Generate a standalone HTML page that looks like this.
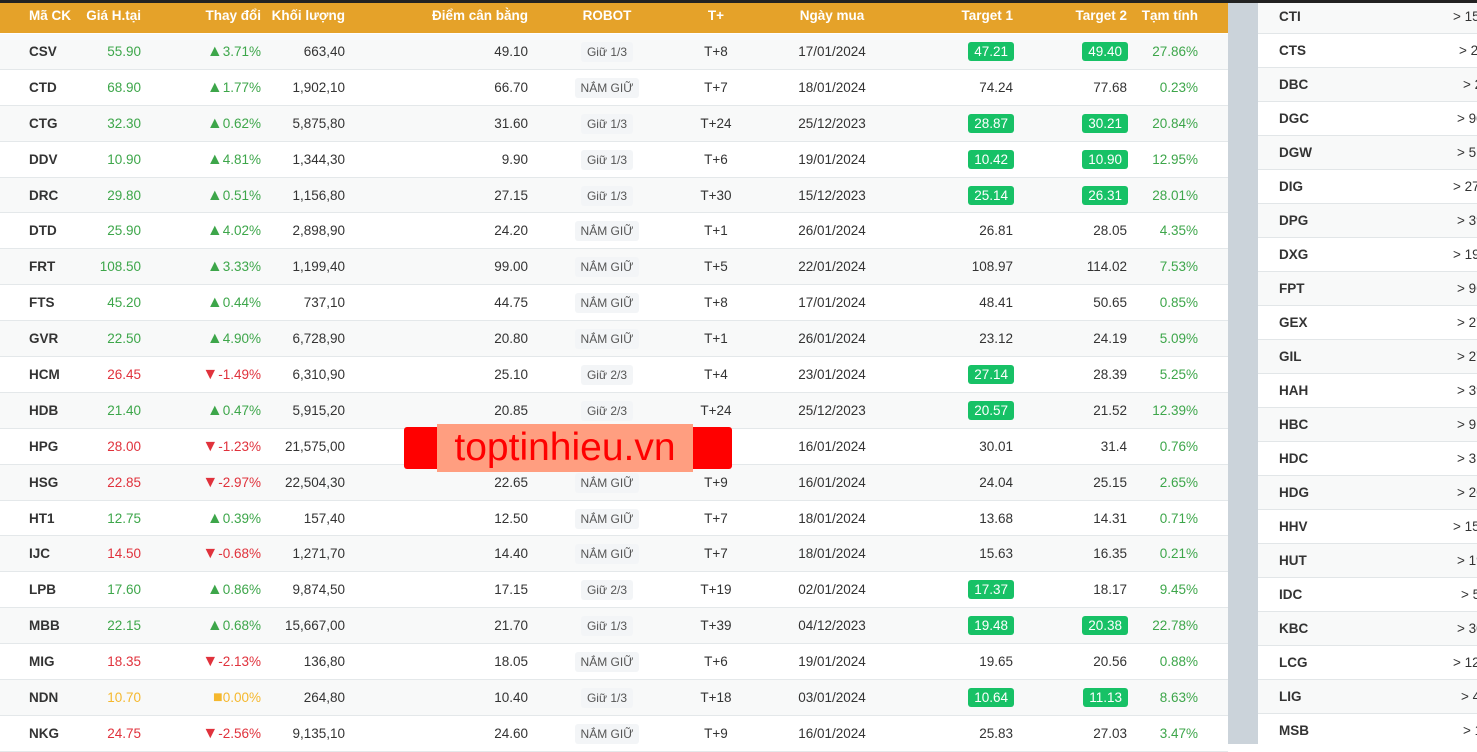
<!DOCTYPE html>
<html><head><meta charset="utf-8">
<style>
*{margin:0;padding:0;box-sizing:border-box}
body{width:1477px;height:744px;overflow:hidden;background:#fff;font-family:"Liberation Sans",Arial,sans-serif;font-size:13.5px;color:#333;position:relative}
.topbar{position:absolute;left:0;top:0;width:1477px;height:3px;background:#222;z-index:5}
.hdr{position:absolute;left:0;top:2px;width:1228px;height:31px;background:#e5a229;color:#fff;font-weight:bold;font-size:13.5px}
.hdr span{position:absolute;top:6px;white-space:nowrap}
.rows{position:absolute;left:0;top:34px;width:1228px}
.row{position:relative;height:35.9px;border-bottom:1px solid #e4e8ea}
.row.g{background:#f8f9f9}
.row span{position:absolute;top:10px;white-space:nowrap}
.c1{left:29px;font-weight:bold;color:#333}
.c2{right:1087px}.c3{right:967px}.c4{right:883px}.c5{right:700px}
.c6{left:557px;width:100px;text-align:center}
.c7{left:676px;width:80px;text-align:center}
.c8{left:772px;width:120px;text-align:center}
.c9{right:215px}.c10{right:101px}.c11{right:30px}
.gr{color:#3da64a}.rd{color:#e0323c}.yl{color:#f5b82e}
.c3 em{font-style:normal;font-size:16px;line-height:13px}
.rb{display:inline-block;background:#f3f5f7;border-radius:3px;font-size:12px;color:#555;padding:3px 6px;margin-top:-4px;font-style:normal}
.bd{display:inline-block;background:#17c166;color:#fff;border-radius:3px;padding:2px 6px;margin-top:-2px;margin-right:-1px;font-weight:normal;font-size:13.5px}
.gap{position:absolute;left:1228px;top:0;width:30px;height:744px;background:#cbd3da}
.side{position:absolute;left:1258px;top:0;width:219px;height:744px;overflow:hidden}
.srow{position:relative;height:34px;border-bottom:1px solid #e2e6e8}
.srow.g{background:#f8f9f9}
.srow span{position:absolute;top:9px;white-space:nowrap}
.srow .k{left:21px;font-weight:bold}
.wm{position:absolute;left:404px;top:427px;width:328px;height:42px;background:#ff0000;border-radius:3px;z-index:4}
.wm2{position:absolute;left:437px;top:424px;width:256px;height:48px;background:#ff9e80;z-index:5;color:#ff0000;font-size:39px;line-height:48px;text-align:center;font-family:"Liberation Sans",sans-serif}
</style></head><body>
<div class="topbar"></div>
<div class="hdr">
<span style="left:29px">Mã CK</span>
<span style="right:1087px">Giá H.tại</span>
<span style="right:967px">Thay đổi</span>
<span style="right:883px">Khối lượng</span>
<span style="right:700px">Điểm cân bằng</span>
<span style="left:557px;width:100px;text-align:center">ROBOT</span>
<span style="left:676px;width:80px;text-align:center">T+</span>
<span style="left:772px;width:120px;text-align:center">Ngày mua</span>
<span style="right:215px">Target 1</span>
<span style="right:101px">Target 2</span>
<span style="right:30px">Tạm tính</span>
</div>
<div class="rows">
<div class="row g"><span class="c1">CSV</span><span class="c2 gr">55.90</span><span class="c3 gr"><em>▲</em>3.71%</span><span class="c4">663,40</span><span class="c5">49.10</span><span class="c6"><i class="rb">Giữ 1/3</i></span><span class="c7">T+8</span><span class="c8">17/01/2024</span><span class="c9"><b class="bd">47.21</b></span><span class="c10"><b class="bd">49.40</b></span><span class="c11 gr">27.86%</span></div>
<div class="row"><span class="c1">CTD</span><span class="c2 gr">68.90</span><span class="c3 gr"><em>▲</em>1.77%</span><span class="c4">1,902,10</span><span class="c5">66.70</span><span class="c6"><i class="rb">NẮM GIỮ</i></span><span class="c7">T+7</span><span class="c8">18/01/2024</span><span class="c9">74.24</span><span class="c10">77.68</span><span class="c11 gr">0.23%</span></div>
<div class="row g"><span class="c1">CTG</span><span class="c2 gr">32.30</span><span class="c3 gr"><em>▲</em>0.62%</span><span class="c4">5,875,80</span><span class="c5">31.60</span><span class="c6"><i class="rb">Giữ 1/3</i></span><span class="c7">T+24</span><span class="c8">25/12/2023</span><span class="c9"><b class="bd">28.87</b></span><span class="c10"><b class="bd">30.21</b></span><span class="c11 gr">20.84%</span></div>
<div class="row"><span class="c1">DDV</span><span class="c2 gr">10.90</span><span class="c3 gr"><em>▲</em>4.81%</span><span class="c4">1,344,30</span><span class="c5">9.90</span><span class="c6"><i class="rb">Giữ 1/3</i></span><span class="c7">T+6</span><span class="c8">19/01/2024</span><span class="c9"><b class="bd">10.42</b></span><span class="c10"><b class="bd">10.90</b></span><span class="c11 gr">12.95%</span></div>
<div class="row g"><span class="c1">DRC</span><span class="c2 gr">29.80</span><span class="c3 gr"><em>▲</em>0.51%</span><span class="c4">1,156,80</span><span class="c5">27.15</span><span class="c6"><i class="rb">Giữ 1/3</i></span><span class="c7">T+30</span><span class="c8">15/12/2023</span><span class="c9"><b class="bd">25.14</b></span><span class="c10"><b class="bd">26.31</b></span><span class="c11 gr">28.01%</span></div>
<div class="row"><span class="c1">DTD</span><span class="c2 gr">25.90</span><span class="c3 gr"><em>▲</em>4.02%</span><span class="c4">2,898,90</span><span class="c5">24.20</span><span class="c6"><i class="rb">NẮM GIỮ</i></span><span class="c7">T+1</span><span class="c8">26/01/2024</span><span class="c9">26.81</span><span class="c10">28.05</span><span class="c11 gr">4.35%</span></div>
<div class="row g"><span class="c1">FRT</span><span class="c2 gr">108.50</span><span class="c3 gr"><em>▲</em>3.33%</span><span class="c4">1,199,40</span><span class="c5">99.00</span><span class="c6"><i class="rb">NẮM GIỮ</i></span><span class="c7">T+5</span><span class="c8">22/01/2024</span><span class="c9">108.97</span><span class="c10">114.02</span><span class="c11 gr">7.53%</span></div>
<div class="row"><span class="c1">FTS</span><span class="c2 gr">45.20</span><span class="c3 gr"><em>▲</em>0.44%</span><span class="c4">737,10</span><span class="c5">44.75</span><span class="c6"><i class="rb">NẮM GIỮ</i></span><span class="c7">T+8</span><span class="c8">17/01/2024</span><span class="c9">48.41</span><span class="c10">50.65</span><span class="c11 gr">0.85%</span></div>
<div class="row g"><span class="c1">GVR</span><span class="c2 gr">22.50</span><span class="c3 gr"><em>▲</em>4.90%</span><span class="c4">6,728,90</span><span class="c5">20.80</span><span class="c6"><i class="rb">NẮM GIỮ</i></span><span class="c7">T+1</span><span class="c8">26/01/2024</span><span class="c9">23.12</span><span class="c10">24.19</span><span class="c11 gr">5.09%</span></div>
<div class="row"><span class="c1">HCM</span><span class="c2 rd">26.45</span><span class="c3 rd"><em>▼</em>-1.49%</span><span class="c4">6,310,90</span><span class="c5">25.10</span><span class="c6"><i class="rb">Giữ 2/3</i></span><span class="c7">T+4</span><span class="c8">23/01/2024</span><span class="c9"><b class="bd">27.14</b></span><span class="c10">28.39</span><span class="c11 gr">5.25%</span></div>
<div class="row g"><span class="c1">HDB</span><span class="c2 gr">21.40</span><span class="c3 gr"><em>▲</em>0.47%</span><span class="c4">5,915,20</span><span class="c5">20.85</span><span class="c6"><i class="rb">Giữ 2/3</i></span><span class="c7">T+24</span><span class="c8">25/12/2023</span><span class="c9"><b class="bd">20.57</b></span><span class="c10">21.52</span><span class="c11 gr">12.39%</span></div>
<div class="row"><span class="c1">HPG</span><span class="c2 rd">28.00</span><span class="c3 rd"><em>▼</em>-1.23%</span><span class="c4">21,575,00</span><span class="c5">27.60</span><span class="c6"><i class="rb">NẮM GIỮ</i></span><span class="c7">T+9</span><span class="c8">16/01/2024</span><span class="c9">30.01</span><span class="c10">31.4</span><span class="c11 gr">0.76%</span></div>
<div class="row g"><span class="c1">HSG</span><span class="c2 rd">22.85</span><span class="c3 rd"><em>▼</em>-2.97%</span><span class="c4">22,504,30</span><span class="c5">22.65</span><span class="c6"><i class="rb">NẮM GIỮ</i></span><span class="c7">T+9</span><span class="c8">16/01/2024</span><span class="c9">24.04</span><span class="c10">25.15</span><span class="c11 gr">2.65%</span></div>
<div class="row"><span class="c1">HT1</span><span class="c2 gr">12.75</span><span class="c3 gr"><em>▲</em>0.39%</span><span class="c4">157,40</span><span class="c5">12.50</span><span class="c6"><i class="rb">NẮM GIỮ</i></span><span class="c7">T+7</span><span class="c8">18/01/2024</span><span class="c9">13.68</span><span class="c10">14.31</span><span class="c11 gr">0.71%</span></div>
<div class="row g"><span class="c1">IJC</span><span class="c2 rd">14.50</span><span class="c3 rd"><em>▼</em>-0.68%</span><span class="c4">1,271,70</span><span class="c5">14.40</span><span class="c6"><i class="rb">NẮM GIỮ</i></span><span class="c7">T+7</span><span class="c8">18/01/2024</span><span class="c9">15.63</span><span class="c10">16.35</span><span class="c11 gr">0.21%</span></div>
<div class="row"><span class="c1">LPB</span><span class="c2 gr">17.60</span><span class="c3 gr"><em>▲</em>0.86%</span><span class="c4">9,874,50</span><span class="c5">17.15</span><span class="c6"><i class="rb">Giữ 2/3</i></span><span class="c7">T+19</span><span class="c8">02/01/2024</span><span class="c9"><b class="bd">17.37</b></span><span class="c10">18.17</span><span class="c11 gr">9.45%</span></div>
<div class="row g"><span class="c1">MBB</span><span class="c2 gr">22.15</span><span class="c3 gr"><em>▲</em>0.68%</span><span class="c4">15,667,00</span><span class="c5">21.70</span><span class="c6"><i class="rb">Giữ 1/3</i></span><span class="c7">T+39</span><span class="c8">04/12/2023</span><span class="c9"><b class="bd">19.48</b></span><span class="c10"><b class="bd">20.38</b></span><span class="c11 gr">22.78%</span></div>
<div class="row"><span class="c1">MIG</span><span class="c2 rd">18.35</span><span class="c3 rd"><em>▼</em>-2.13%</span><span class="c4">136,80</span><span class="c5">18.05</span><span class="c6"><i class="rb">NẮM GIỮ</i></span><span class="c7">T+6</span><span class="c8">19/01/2024</span><span class="c9">19.65</span><span class="c10">20.56</span><span class="c11 gr">0.88%</span></div>
<div class="row g"><span class="c1">NDN</span><span class="c2 yl">10.70</span><span class="c3 yl"><em>■</em>0.00%</span><span class="c4">264,80</span><span class="c5">10.40</span><span class="c6"><i class="rb">Giữ 1/3</i></span><span class="c7">T+18</span><span class="c8">03/01/2024</span><span class="c9"><b class="bd">10.64</b></span><span class="c10"><b class="bd">11.13</b></span><span class="c11 gr">8.63%</span></div>
<div class="row"><span class="c1">NKG</span><span class="c2 rd">24.75</span><span class="c3 rd"><em>▼</em>-2.56%</span><span class="c4">9,135,10</span><span class="c5">24.60</span><span class="c6"><i class="rb">NẮM GIỮ</i></span><span class="c7">T+9</span><span class="c8">16/01/2024</span><span class="c9">25.83</span><span class="c10">27.03</span><span class="c11 gr">3.47%</span></div>
</div>
<div class="wm"></div><div class="wm2">toptinhieu.vn</div>
<div class="gap"></div>
<div class="side">
<div class="srow g"><span class="k">CTI</span><span style="left:195px">&gt; 15</span></div>
<div class="srow"><span class="k">CTS</span><span style="left:201px">&gt; 29</span></div>
<div class="srow g"><span class="k">DBC</span><span style="left:205px">&gt; 2</span></div>
<div class="srow"><span class="k">DGC</span><span style="left:199px">&gt; 90</span></div>
<div class="srow g"><span class="k">DGW</span><span style="left:199px">&gt; 5</span></div>
<div class="srow"><span class="k">DIG</span><span style="left:195px">&gt; 27</span></div>
<div class="srow g"><span class="k">DPG</span><span style="left:199px">&gt; 39</span></div>
<div class="srow"><span class="k">DXG</span><span style="left:195px">&gt; 19</span></div>
<div class="srow g"><span class="k">FPT</span><span style="left:199px">&gt; 96</span></div>
<div class="srow"><span class="k">GEX</span><span style="left:199px">&gt; 27</span></div>
<div class="srow g"><span class="k">GIL</span><span style="left:199px">&gt; 27</span></div>
<div class="srow"><span class="k">HAH</span><span style="left:199px">&gt; 39</span></div>
<div class="srow g"><span class="k">HBC</span><span style="left:199px">&gt; 9</span></div>
<div class="srow"><span class="k">HDC</span><span style="left:199px">&gt; 31</span></div>
<div class="srow g"><span class="k">HDG</span><span style="left:199px">&gt; 26</span></div>
<div class="srow"><span class="k">HHV</span><span style="left:195px">&gt; 15</span></div>
<div class="srow g"><span class="k">HUT</span><span style="left:199px">&gt; 19</span></div>
<div class="srow"><span class="k">IDC</span><span style="left:203px">&gt; 5</span></div>
<div class="srow g"><span class="k">KBC</span><span style="left:199px">&gt; 30</span></div>
<div class="srow"><span class="k">LCG</span><span style="left:195px">&gt; 12</span></div>
<div class="srow g"><span class="k">LIG</span><span style="left:203px">&gt; 4</span></div>
<div class="srow"><span class="k">MSB</span><span style="left:205px">&gt; 1</span></div>
</div>
</body></html>
